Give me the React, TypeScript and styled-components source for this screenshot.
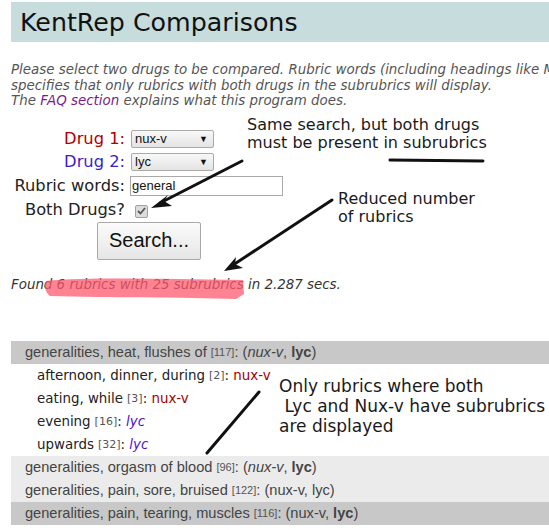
import * as React from "react";
import styled, { createGlobalStyle } from "styled-components";

const Global = createGlobalStyle`
  body {
    margin: 0;
    overflow: hidden;
    background: #fff;
    font-family: "DejaVu Sans", Verdana, sans-serif;
  }
`;

const Page = styled.div`
  position: relative;
  width: 820px;
  padding: 2px 0 0 11px;
`;

const TitleBar = styled.div`
  height: 40px;
  background: #c6dcdd;
  display: flex;
  align-items: center;
  padding-left: 9px;
  font-size: 25.3px;
  color: #111;
`;

const Intro = styled.p`
  margin: 20px 0 0;
  font-style: italic;
  font-size: 13.4px;
  line-height: 15.5px;
  color: #555;
  white-space: nowrap;
`;

const FaqLink = styled.a`
  color: #7a1a8a;
  text-decoration: none;
`;

const Form = styled.div`
  display: grid;
  grid-template-columns: 114px auto;
  column-gap: 5px;
  row-gap: 5px;
  align-items: center;
  margin-top: 21px;
  justify-items: start;
`;

const Label = styled.label<{ tone?: string }>`
  justify-self: end;
  font-size: 16.3px;
  line-height: 18px;
  color: ${(p) => p.tone || "#222"};
`;

const Select = styled.div`
  width: 73px;
  height: 16px;
  border: 1px solid #a9a9a9;
  border-radius: 2px;
  background: linear-gradient(#f8f8f8, #e4e4e4);
  display: flex;
  align-items: center;
  justify-content: space-between;
  padding: 0 5px 0 3px;
  box-sizing: content-box;
  font-family: "Liberation Sans", Arial, sans-serif;
  font-size: 13px;
  color: #111;
  margin-left: 1px;
`;

const Caret = styled.span`
  font-size: 9px;
  color: #111;
`;

const TextInput = styled.div`
  width: 150px;
  height: 18px;
  border: 1px solid #a9a9a9;
  padding-left: 1px;
  display: flex;
  align-items: center;
  font-family: "Liberation Sans", Arial, sans-serif;
  font-size: 13px;
  color: #111;
  box-sizing: content-box;
`;

const Check = styled.div`
  width: 11px;
  height: 11px;
  margin-left: 5px;
  margin-top: 3px;
  border: 1px solid #a0a0a0;
  border-radius: 2px;
  background: #dcdcdc;
  display: flex;
  align-items: center;
  justify-content: center;
`;

const SearchButton = styled.button`
  margin: 3px 0 0 86px;
  width: 104px;
  height: 38px;
  border: 1px solid #a9a9a9;
  border-radius: 2px;
  background: linear-gradient(#fbfbfb, #e6e6e6);
  font-family: "Liberation Sans", Arial, sans-serif;
  font-size: 20px;
  color: #111;
`;

const Found = styled.p`
  margin: 17px 0 0;
  font-style: italic;
  font-size: 13.4px;
  line-height: 15px;
  color: #333;
`;

const Results = styled.div`
  margin-top: 49px;
`;

const RubricRow = styled.div<{ shade: string }>`
  height: 23px;
  display: flex;
  align-items: center;
  padding-left: 14px;
  background: ${(p) => p.shade};
  font-family: "Liberation Sans", Arial, sans-serif;
  font-size: 14.6px;
  color: #444;
  white-space: pre;
`;

const SubRow = styled.div`
  height: 23px;
  display: flex;
  align-items: center;
  padding-left: 26px;
  font-size: 13.4px;
  color: #222;
  white-space: pre;
`;

const Count = styled.span`
  font-size: 11px;
  color: #555;
  margin-left: 4px;
`;

const Nux = styled.span`
  color: #a00000;
`;

const Lyc = styled.span`
  color: #5511cc;
  font-style: italic;
`;

const Note = styled.div<{ x: number; y: number; lh?: number; size?: number }>`
  position: absolute;
  left: ${(p) => p.x}px;
  top: ${(p) => p.y}px;
  font-size: ${(p) => p.size || 16}px;
  line-height: ${(p) => p.lh || 18}px;
  color: #1a1a1a;
  white-space: pre;
`;

const Ink = styled.svg`
  position: absolute;
  left: 0;
  top: 0;
  pointer-events: none;
`;

const rubrics = [
  { text: "generalities, heat, flushes of", n: 117, shade: "#c8c8c8", style: "mixed" },
  { text: "generalities, orgasm of blood", n: 96, shade: "#ebebeb", style: "mixed" },
  { text: "generalities, pain, sore, bruised", n: 122, shade: "#ebebeb", style: "plain" },
  { text: "generalities, pain, tearing, muscles", n: 116, shade: "#c8c8c8", style: "bold" },
];

const subs = [
  { text: "afternoon, dinner, during", n: 2, drug: "nux" },
  { text: "eating, while", n: 3, drug: "nux" },
  { text: "evening", n: 16, drug: "lyc" },
  { text: "upwards", n: 32, drug: "lyc" },
];

const Drugs: React.FC<{ style: string }> = ({ style }) => {
  if (style === "plain") return <span>(nux-v, lyc)</span>;
  return (
    <span>
      ({style === "mixed" ? <i>nux-v</i> : "nux-v"}, <b>lyc</b>)
    </span>
  );
};

const Rubric: React.FC<{ r: (typeof rubrics)[number] }> = ({ r }) => (
  <RubricRow shade={r.shade}>
    {r.text}
    <Count>[{r.n}]</Count>
    {": "}
    <Drugs style={r.style} />
  </RubricRow>
);

export default function App() {
  return (
    <>
      <Global />
      <Page>
        <TitleBar>KentRep Comparisons</TitleBar>
        <Intro>
          Please select two drugs to be compared. Rubric words (including headings like Mind) are optional. Both Drugs
          <br />
          specifies that only rubrics with both drugs in the subrubrics will display.
          <br />
          The <FaqLink href="#">FAQ section</FaqLink> explains what this program does.
        </Intro>
        <Form>
          <Label tone="#b00000">Drug 1:</Label>
          <Select>
            nux-v<Caret>▼</Caret>
          </Select>
          <Label tone="#3a1ec8">Drug 2:</Label>
          <Select>
            lyc<Caret>▼</Caret>
          </Select>
          <Label>Rubric words:</Label>
          <TextInput>general</TextInput>
          <Label>Both Drugs?</Label>
          <Check>
            <svg width="9" height="8" viewBox="0 0 9 8">
              <path d="M1 4 L3.5 6.5 L8 1" fill="none" stroke="#555" strokeWidth="1.8" />
            </svg>
          </Check>
        </Form>
        <SearchButton>Search...</SearchButton>
        <Found>Found 6 rubrics with 25 subrubrics in 2.287 secs.</Found>
        <Results>
          <Rubric r={rubrics[0]} />
          {subs.map((s) => (
            <SubRow key={s.text}>
              {s.text}
              <Count>[{s.n}]</Count>
              {": "}
              {s.drug === "nux" ? <Nux>nux-v</Nux> : <Lyc>lyc</Lyc>}
            </SubRow>
          ))}
          {rubrics.slice(1).map((r) => (
            <Rubric key={r.text} r={r} />
          ))}
        </Results>

        <Ink width="549" height="530" viewBox="0 0 549 530">
          <path
            d="M46 281 C90 277 160 279 243 280 L244 294 L236 299 C180 297 110 298 50 296 C45 292 44 286 46 281 Z"
            fill="#ff5a6e"
            fillOpacity="0.75"
          />
          <line x1="390" y1="160" x2="483" y2="161" stroke="#111" strokeWidth="3" strokeLinecap="round" />
          <line x1="242" y1="161" x2="160" y2="203" stroke="#111" strokeWidth="3" strokeLinecap="round" />
          <path d="M151 208 L168 195 L164 201 L172 206 Z" fill="#111" />
          <line x1="332" y1="200" x2="233" y2="265" stroke="#111" strokeWidth="3" strokeLinecap="round" />
          <path d="M224 271 L236 257 L235 264 L243 268 Z" fill="#111" />
          <line x1="259" y1="392" x2="207" y2="453" stroke="#111" strokeWidth="3" strokeLinecap="round" />
        </Ink>
        <Note x={247} y={116}>{"Same search, but both drugs\nmust be present in subrubrics"}</Note>
        <Note x={338} y={190}>{"Reduced number\nof rubrics"}</Note>
        <Note x={279} y={376} lh={20} size={17}>
          {"Only rubrics where both\n Lyc and Nux-v have subrubrics\nare displayed"}
        </Note>
      </Page>
    </>
  );
}
